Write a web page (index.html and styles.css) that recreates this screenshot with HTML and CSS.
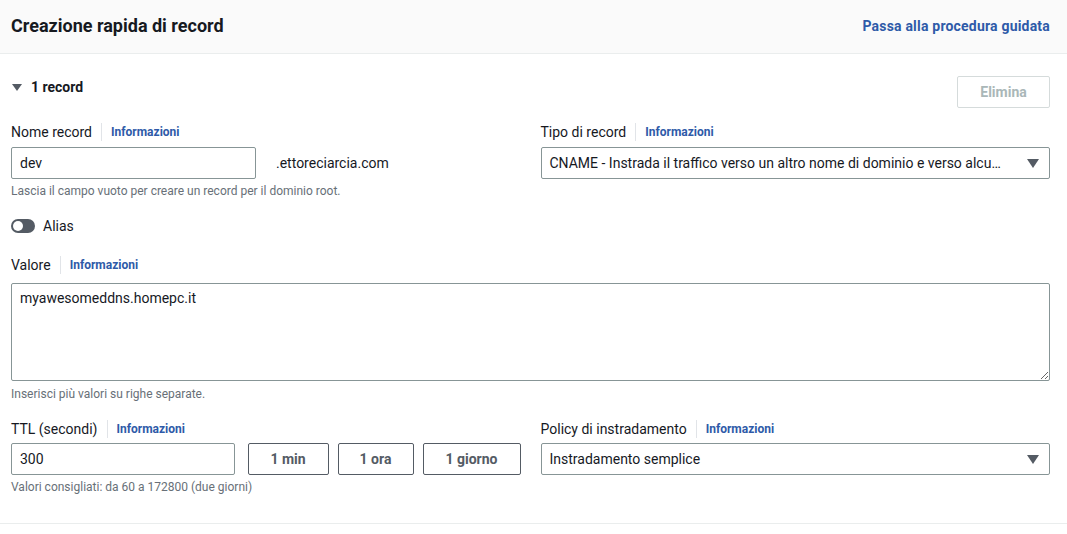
FILE: index.html
```html
<!DOCTYPE html>
<html lang="it">
<head>
<meta charset="utf-8">
<title>Creazione rapida di record</title>
<link rel="stylesheet" href="styles.css">
</head>
<body>
<div class="panel">
  <header class="header">
    <h2 class="title">Creazione rapida di record</h2>
    <a class="link-strong" href="#">Passa alla procedura guidata</a>
  </header>
  <section class="content">
    <div class="record-head">
      <div class="expander"><span class="caret"></span><span>1 record</span></div>
      <button class="btn btn-disabled" type="button">Elimina</button>
    </div>

    <div class="grid">
      <div class="field">
        <div class="label"><span>Nome record</span><span class="sep"></span><a class="info" href="#">Informazioni</a></div>
        <div class="name-row">
          <input class="input input-name" type="text" value="dev" readonly>
          <span class="suffix">.ettoreciarcia.com</span>
        </div>
        <div class="hint">Lascia il campo vuoto per creare un record per il dominio root.</div>
      </div>
      <div class="field">
        <div class="label"><span>Tipo di record</span><span class="sep"></span><a class="info" href="#">Informazioni</a></div>
        <div class="select"><span class="select-text">CNAME - Instrada il traffico verso un altro nome di dominio e verso alcu…</span><span class="select-caret"></span></div>
      </div>
    </div>

    <div class="toggle-row">
      <span class="toggle"><span class="knob"></span></span>
      <span>Alias</span>
    </div>

    <div class="field field-value">
      <div class="label"><span>Valore</span><span class="sep"></span><a class="info" href="#">Informazioni</a></div>
      <textarea class="textarea" readonly>myawesomeddns.homepc.it</textarea>
      <div class="hint">Inserisci più valori su righe separate.</div>
    </div>

    <div class="grid grid-ttl">
      <div class="field">
        <div class="label"><span>TTL (secondi)</span><span class="sep"></span><a class="info" href="#">Informazioni</a></div>
        <div class="ttl-row">
          <input class="input input-ttl" type="text" value="300" readonly>
          <div class="ttl-buttons">
            <button class="btn btn-normal" type="button">1 min</button>
            <button class="btn btn-normal" type="button">1 ora</button>
            <button class="btn btn-normal" type="button">1 giorno</button>
          </div>
        </div>
        <div class="hint">Valori consigliati: da 60 a 172800 (due giorni)</div>
      </div>
      <div class="field">
        <div class="label"><span>Policy di instradamento</span><span class="sep"></span><a class="info" href="#">Informazioni</a></div>
        <div class="select"><span class="select-text">Instradamento semplice</span><span class="select-caret"></span></div>
      </div>
    </div>
  </section>
</div>
</body>
</html>
```

FILE: styles.css
```css
* { box-sizing: border-box; }
html, body { margin: 0; padding: 0; background: #ffffff; }
body {
  font-family: Roboto, "Liberation Sans", Arial, sans-serif;
  font-size: 14px;
  line-height: 20px;
  color: #16191f;
}
.panel { width: 1067px; }
.header {
  height: 54px;
  background: #fafafa;
  border-bottom: 1px solid #eaeded;
  display: flex;
  align-items: center;
  justify-content: space-between;
  padding: 0 17px 2px 11px;
}
.title {
  margin: 0;
  font-size: 18px;
  line-height: 24px;
  font-weight: 700;
  color: #16191f;
}
.link-strong {
  color: #2e5aa8;
  font-weight: 700;
  font-size: 14px;
  letter-spacing: 0.2px;
  text-decoration: none;
}
.content {
  padding: 22px 17px 28px 11px;
  border-bottom: 1px solid #eaeded;
}
.record-head {
  display: flex;
  justify-content: space-between;
  align-items: flex-start;
  height: 32px;
}
.expander {
  display: flex;
  align-items: center;
  font-weight: 700;
  line-height: 22px;
  gap: 9px;
  padding-left: 1px;
}
.caret {
  width: 0; height: 0;
  border-left: 5px solid transparent;
  border-right: 5px solid transparent;
  border-top: 7px solid #545b64;
}
.btn {
  font-family: inherit;
  font-size: 14px;
  font-weight: 700;
  height: 32px;
  background: #ffffff;
  border-radius: 2px;
  padding: 0 20px;
  line-height: 20px;
}
.btn-disabled {
  width: 93px;
  border: 1px solid #d5dbdb;
  color: #aab7b8;
}
.btn-normal {
  border: 1px solid #545b64;
  color: #545b64;
}
.grid {
  display: grid;
  grid-template-columns: minmax(0, 1fr) minmax(0, 1fr);
  column-gap: 20px;
  margin-top: 14px;
}
.field { min-width: 0; }
.label {
  display: flex;
  align-items: center;
  height: 20px;
  margin-bottom: 5px;
}
.sep {
  width: 1px;
  height: 18px;
  background: #e1e4e8;
  margin: 0 9px 0 9px;
}
.info {
  color: #2e5aa8;
  font-weight: 700;
  font-size: 12px;
  text-decoration: none;
}
.input {
  font-family: inherit;
  font-size: 14px;
  color: #16191f;
  height: 32px;
  border: 1px solid #879596;
  border-radius: 2px;
  padding: 0 8px;
  outline: none;
  background: #ffffff;
}
.name-row { display: flex; align-items: center; gap: 20px; }
.input-name { width: 245px; }
.suffix { color: #16191f; }
.hint {
  font-size: 12px;
  line-height: 16px;
  color: #687078;
  margin-top: 4px;
}
.select {
  height: 32px;
  border: 1px solid #879596;
  border-radius: 2px;
  display: flex;
  align-items: center;
  justify-content: space-between;
  padding: 0 10px 0 8px;
}
.select-text {
  white-space: nowrap;
  margin-right: 12px;
}
.select-caret {
  width: 0; height: 0;
  border-left: 6px solid transparent;
  border-right: 6px solid transparent;
  border-top: 9px solid #545b64;
  flex: none;
}
.toggle-row {
  display: flex;
  align-items: center;
  gap: 8px;
  margin-top: 17px;
}
.toggle {
  width: 24px;
  height: 14px;
  border-radius: 7px;
  background: #545b64;
  position: relative;
  flex: none;
}
.knob {
  position: absolute;
  left: 2px; top: 2px;
  width: 10px; height: 10px;
  border-radius: 50%;
  background: #ffffff;
}
.field-value { margin-top: 19px; }
.field-value .label { margin-bottom: 8px; }
.field-value .hint { margin-top: 5px; }
.textarea {
  display: block;
  width: 100%;
  height: 98px;
  font-family: inherit;
  font-size: 14px;
  line-height: 20px;
  color: #16191f;
  border: 1px solid #879596;
  border-radius: 2px;
  padding: 4px 8px;
  outline: none;
  resize: vertical;
}
.grid-ttl { margin-top: 17px; }
.grid-ttl .label { margin-bottom: 4px; }
.ttl-row { display: flex; align-items: center; }
.input-ttl { width: 225px; margin-right: 13px; }
.ttl-buttons { display: flex; gap: 9px; }
.ttl-buttons .btn:nth-child(1) { width: 81px; }
.ttl-buttons .btn:nth-child(2) { width: 76px; }
.ttl-buttons .btn:nth-child(3) { width: 98px; }
```
